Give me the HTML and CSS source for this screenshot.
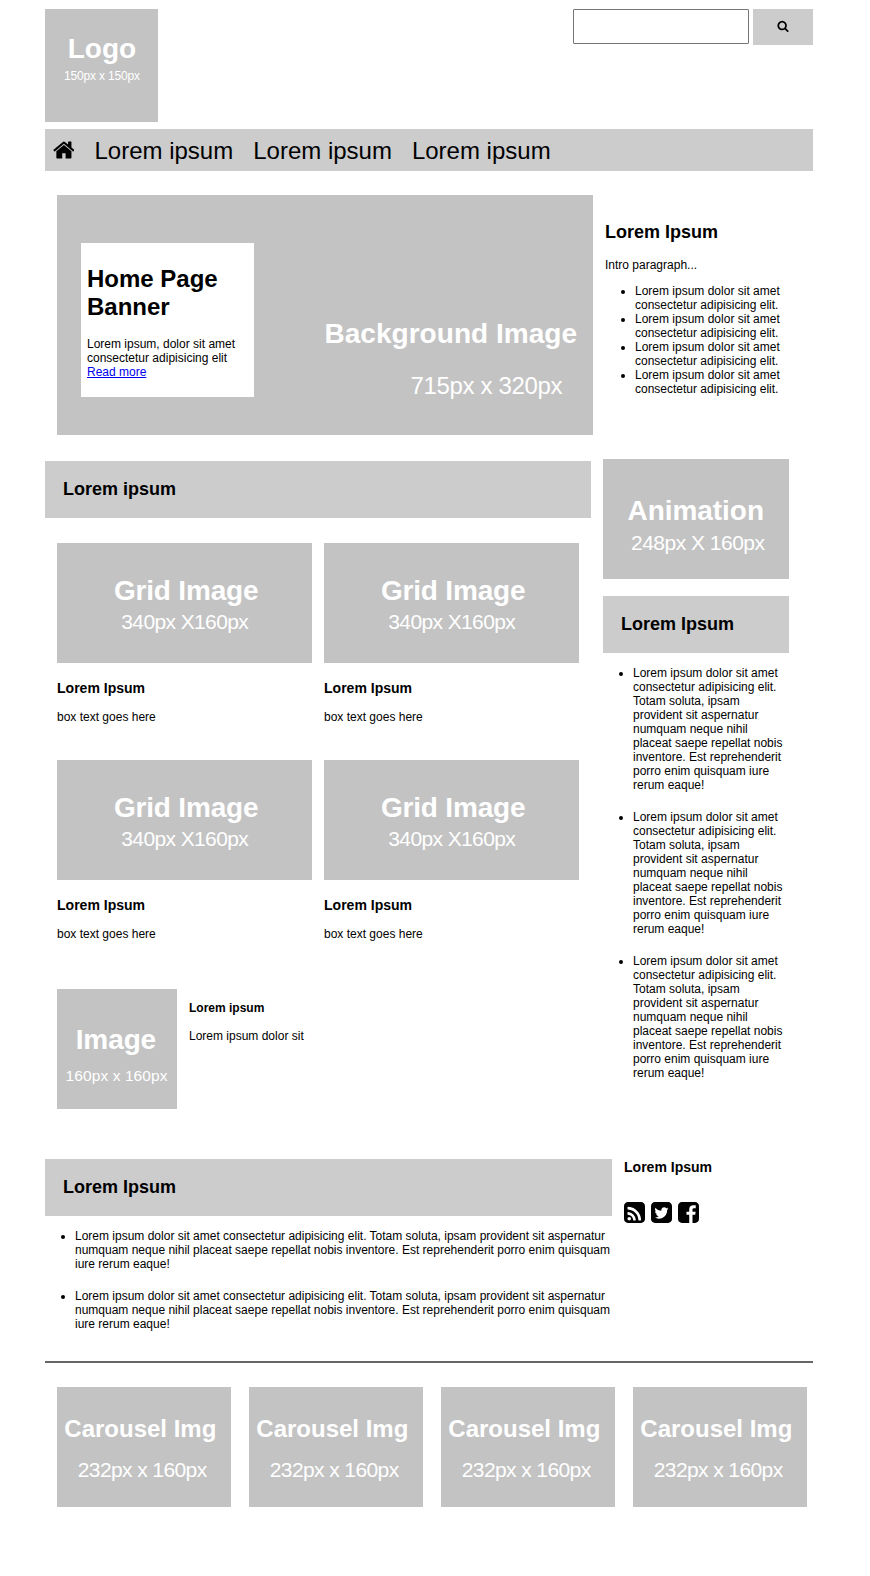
FILE: index.html
```html
<!DOCTYPE html>
<html lang="en">
<head>
<meta charset="utf-8">
<title>Home Page</title>
<link rel="stylesheet" href="styles.css">
</head>
<body>
<div class="page">
  <header class="top">
    <svg class="ph" width="113" height="113" role="img"><text class="ph-title" x="22.7" y="49" textLength="68.5">Logo</text><text class="ph-size s12" x="19" y="71" textLength="76">150px x 150px</text></svg>
    <form class="search">
      <input class="search-input" type="text" aria-label="Search">
      <button class="search-button" type="button" aria-label="Search"><svg width="12" height="12" viewBox="0 0 1792 1792"><path d="M1216 832q0-185-131.5-316.5t-316.5-131.5-316.5 131.5-131.5 316.5 131.5 316.5 316.5 131.5 316.5-131.5 131.5-316.5zm512 832q0 52-38 90t-90 38q-54 0-90-38l-343-342q-179 124-399 124-143 0-273.5-55.5t-225-150-150-225-55.5-273.5 55.5-273.5 150-225 225-150 273.5-55.5 273.5 55.5 225 150 150 225 55.5 273.5q0 220-124 399l343 343q37 37 37 90z"/></svg></button>
    </form>
  </header>

  <nav class="nav">
    <a class="nav-home" aria-label="Home"><svg width="21.8" height="24" viewBox="0 0 1664 1792"><path d="M1408 992v480q0 26-19 45t-45 19h-384v-384h-256v384h-384q-26 0-45-19t-19-45v-480q0-1 .5-3t.5-3l575-474 575 474q1 2 1 6zm223-69l-62 74q-8 9-21 11h-3q-13 0-21-7l-692-577-692 577q-12 8-24 7-13-2-21-11l-62-74q-8-10-7-23.5t11-21.5l719-599q32-26 76-26t76 26l244 204v-195q0-14 9-23t23-9h192q14 0 23 9t9 23v408l219 182q10 8 11 21.5t-7 23.5z"/></svg></a>
    <a class="nav-link">Lorem ipsum</a>
    <a class="nav-link">Lorem ipsum</a>
    <a class="nav-link">Lorem ipsum</a>
  </nav>

  <section class="hero">
    <div class="banner">
      <svg class="ph banner-bg" width="536" height="240" role="img"><text class="ph-title" x="267.5" y="148.3" textLength="252.5">Background Image</text><text class="ph-size s24" x="353.5" y="199" textLength="152">715px x 320px</text></svg>
      <div class="banner-card">
        <h1>Home Page Banner</h1>
        <p>Lorem ipsum, dolor sit amet consectetur adipisicing elit <a href="#">Read more</a></p>
      </div>
    </div>
    <div class="intro">
      <h2>Lorem Ipsum</h2>
      <p>Intro paragraph...</p>
      <ul>
        <li>Lorem ipsum dolor sit amet consectetur adipisicing elit.</li>
        <li>Lorem ipsum dolor sit amet consectetur adipisicing elit.</li>
        <li>Lorem ipsum dolor sit amet consectetur adipisicing elit.</li>
        <li>Lorem ipsum dolor sit amet consectetur adipisicing elit.</li>
      </ul>
    </div>
  </section>

  <div class="columns">
    <main class="main">
      <h2 class="bar">Lorem ipsum</h2>
      <div class="grid">
        <article class="box">
          <svg class="ph" width="255" height="120" role="img"><text class="ph-title" x="57" y="57" textLength="144.5">Grid Image</text><text class="ph-size s21" x="64.3" y="85.5" textLength="127.5">340px X160px</text></svg>
          <h3>Lorem Ipsum</h3><p>box text goes here</p>
        </article>
        <article class="box">
          <svg class="ph" width="255" height="120" role="img"><text class="ph-title" x="57" y="57" textLength="144.5">Grid Image</text><text class="ph-size s21" x="64.3" y="85.5" textLength="127.5">340px X160px</text></svg>
          <h3>Lorem Ipsum</h3><p>box text goes here</p>
        </article>
        <article class="box">
          <svg class="ph" width="255" height="120" role="img"><text class="ph-title" x="57" y="57" textLength="144.5">Grid Image</text><text class="ph-size s21" x="64.3" y="85.5" textLength="127.5">340px X160px</text></svg>
          <h3>Lorem Ipsum</h3><p>box text goes here</p>
        </article>
        <article class="box">
          <svg class="ph" width="255" height="120" role="img"><text class="ph-title" x="57" y="57" textLength="144.5">Grid Image</text><text class="ph-size s21" x="64.3" y="85.5" textLength="127.5">340px X160px</text></svg>
          <h3>Lorem Ipsum</h3><p>box text goes here</p>
        </article>
      </div>
      <article class="media">
        <svg class="ph" width="120" height="120" role="img"><text class="ph-title" x="18.7" y="60" textLength="80.5">Image</text><text class="ph-size s15" x="8.5" y="92" textLength="102">160px x 160px</text></svg>
        <div class="media-text"><h4>Lorem ipsum</h4><p>Lorem ipsum dolor sit</p></div>
      </article>
    </main>
    <aside class="side">
      <svg class="ph" width="186" height="120" role="img"><text class="ph-title" x="24.5" y="61" textLength="136.5">Animation</text><text class="ph-size s21" x="28" y="91" textLength="134">248px X 160px</text></svg>
      <h2 class="bar side-bar">Lorem Ipsum</h2>
      <ul class="notes">
        <li>Lorem ipsum dolor sit amet consectetur adipisicing elit. Totam soluta, ipsam provident sit aspernatur numquam neque nihil placeat saepe repellat nobis inventore. Est reprehenderit porro enim quisquam iure rerum eaque!</li>
        <li>Lorem ipsum dolor sit amet consectetur adipisicing elit. Totam soluta, ipsam provident sit aspernatur numquam neque nihil placeat saepe repellat nobis inventore. Est reprehenderit porro enim quisquam iure rerum eaque!</li>
        <li>Lorem ipsum dolor sit amet consectetur adipisicing elit. Totam soluta, ipsam provident sit aspernatur numquam neque nihil placeat saepe repellat nobis inventore. Est reprehenderit porro enim quisquam iure rerum eaque!</li>
      </ul>
    </aside>
  </div>

  <section class="lower">
    <div class="news">
      <h2 class="bar">Lorem Ipsum</h2>
      <ul class="notes">
        <li>Lorem ipsum dolor sit amet consectetur adipisicing elit. Totam soluta, ipsam provident sit aspernatur numquam neque nihil placeat saepe repellat nobis inventore. Est reprehenderit porro enim quisquam iure rerum eaque!</li>
        <li>Lorem ipsum dolor sit amet consectetur adipisicing elit. Totam soluta, ipsam provident sit aspernatur numquam neque nihil placeat saepe repellat nobis inventore. Est reprehenderit porro enim quisquam iure rerum eaque!</li>
      </ul>
    </div>
    <div class="social">
      <h3>Lorem Ipsum</h3>
      <div class="social-icons">
        <svg viewBox="128 128 1536 1536"><path d="M640 1344q0-53-37.5-90.5t-90.5-37.5-90.5 37.5-37.5 90.5 37.5 90.5 90.5 37.5 90.5-37.5 37.5-90.5zm351 94q-13-232-177-396t-396-177q-14-1-24 9t-10 23v128q0 13 8.5 22t21.5 10q154 11 264 121t121 264q1 13 10 21.5t22 8.5h128q13 0 23-10t9-24zm384 1q-5-154-56-297.5t-139.5-260-205-205-260-139.5-297.5-56q-14-1-23 9-10 10-10 23v128q0 13 9 22t22 10q204 7 378 111.5t278.5 278.5 111.5 378q1 13 10 22t22 9h128q13 0 23-10 11-9 9-23zM1664 416v960q0 119-84.5 203.5t-203.5 84.5h-960q-119 0-203.5-84.5t-84.5-203.5v-960q0-119 84.5-203.5t203.5-84.5h960q119 0 203.5 84.5t84.5 203.5z"/></svg>
        <svg viewBox="128 128 1536 1536"><path d="M1408 610q-56 25-121 34 68-40 93-117-65 38-134 51-61-66-153-66-87 0-148.5 61.5t-61.5 148.5q0 29 5 48-129-7-242-65t-192-155q-29 50-29 106 0 114 91 175-47-1-100-26v2q0 75 50 133.5t123 72.5q-29 8-51 8-13 0-39-4 21 63 74.5 104t121.5 42q-116 90-261 90-26 0-50-3 148 94 322 94 112 0 210-35.5t168-95 120.5-137 75-162 24.5-168.5q0-18-1-27 63-45 105-109zm256-194v960q0 119-84.5 203.5t-203.5 84.5h-960q-119 0-203.5-84.5t-84.5-203.5v-960q0-119 84.5-203.5t203.5-84.5h960q119 0 203.5 84.5t84.5 203.5z"/></svg>
        <svg viewBox="128 128 1536 1536"><path d="M1376 128q119 0 203.5 84.5t84.5 203.5v960q0 119-84.5 203.5t-203.5 84.5h-188v-595h199l30-232h-229v-148q0-56 23.5-84t91.5-28l122-1v-207q-63-9-178-9-136 0-217.5 80t-81.5 226v171h-200v232h200v595h-532q-119 0-203.5-84.5t-84.5-203.5v-960q0-119 84.5-203.5t203.5-84.5h960z"/></svg>
      </div>
    </div>
  </section>

  <footer class="carousel">
    <svg class="ph" width="174" height="120" role="img"><text class="ph-title s24" x="7.3" y="50" textLength="152">Carousel Img</text><text class="ph-size s21" x="20.7" y="89.7" textLength="129.5">232px x 160px</text></svg>
    <svg class="ph" width="174" height="120" role="img"><text class="ph-title s24" x="7.3" y="50" textLength="152">Carousel Img</text><text class="ph-size s21" x="20.7" y="89.7" textLength="129.5">232px x 160px</text></svg>
    <svg class="ph" width="174" height="120" role="img"><text class="ph-title s24" x="7.3" y="50" textLength="152">Carousel Img</text><text class="ph-size s21" x="20.7" y="89.7" textLength="129.5">232px x 160px</text></svg>
    <svg class="ph" width="174" height="120" role="img"><text class="ph-title s24" x="7.3" y="50" textLength="152">Carousel Img</text><text class="ph-size s21" x="20.7" y="89.7" textLength="129.5">232px x 160px</text></svg>
  </footer>
</div>
</body>
</html>
```
FILE: styles.css
```css
* { box-sizing: border-box; }

body {
  margin: 0;
  background: #fff;
  color: #000;
  font: 12px/14px "Liberation Sans", Arial, sans-serif;
}

.page {
  width: 768px;
  height: 1576px;
  margin-left: 45px;
  padding-top: 9px;
}

h1 { margin: 16px 0; font-size: 24px; line-height: 28px; }
h2 { margin: 15px 0; font-size: 18px; line-height: 21px; }
h3 { margin: 14px 0; font-size: 14.04px; line-height: 16px; }
h4 { margin: 16px 0 14px; font-size: 12px; line-height: 14px; }
p { margin: 12px 0; }
ul { margin: 12px 0; padding-left: 30px; }

/* Placeholder pictures */
.ph { display: block; flex: none; background: #c3c3c3; fill: #fff; }
.ph-title { font-size: 28px; font-weight: bold; }
.s24 { font-size: 24px; }
.s21 { font-size: 21px; }
.s15 { font-size: 15.5px; }
.s12 { font-size: 12px; }

.top { display: flex; justify-content: space-between; align-items: flex-start; }
.search { display: flex; gap: 4px; }
.search-input {
  width: 176px;
  height: 35px;
  border: 1px solid #767676;
  border-radius: 1px;
  background: #fff;
}
.search-button {
  display: flex;
  justify-content: center;
  align-items: center;
  width: 60px;
  height: 36px;
  padding: 0 0 2px;
  border: 0;
  background: #ccc;
}

.nav {
  display: flex;
  align-items: center;
  gap: 20px;
  height: 42px;
  margin-top: 7px;
  padding-left: 7.7px;
  background: #ccc;
  font-size: 24px;
  line-height: 28px;
}
.nav-home svg { display: block; }
.nav-link { padding-top: 2px; }

.hero { display: flex; gap: 12px; margin-top: 24px; padding-left: 12px; }
.banner { display: grid; width: 536px; height: 240px; }
.banner-bg, .banner-card { grid-area: 1 / 1; }
.banner-card {
  align-self: start;
  width: 173px;
  height: 154px;
  margin: 48px 0 0 24px;
  padding: 0 6px;
  background: #fff;
}
.banner-card h1 { margin-top: 22px; }
.banner-card a { color: #00e; }
.intro { width: 186px; padding-top: 27px; }
.intro h2 { margin-top: 0; }

.bar { margin: 0; padding: 18px; background: #ccc; }

.columns { display: flex; gap: 12px; margin-top: 24px; height: 700px; }
.main { width: 546px; padding-top: 2px; }
.grid {
  display: grid;
  grid-template-columns: 255px 255px;
  gap: 24px 12px;
  padding: 25px 12px 0;
}
.box { height: 193px; }
.box h3 { margin-top: 17px; }
.media { display: flex; gap: 12px; padding: 36px 12px 0; }
.media-text h4 { margin: 12px 0 14px; }
.side { width: 186px; }
.side-bar { margin-top: 17px; }

.notes { margin: 13px 0 0; }
.notes li { margin-bottom: 18px; }

.lower { display: flex; gap: 12px; height: 202px; }
.news { width: 567px; }
.social h3 { margin: 0; }
.social-icons { display: flex; gap: 6px; margin-top: 27px; }
.social-icons svg { width: 21px; height: 21px; }

.carousel {
  display: flex;
  gap: 18px;
  padding: 24px 12px 0;
  border-top: 2px solid #666;
}
```
